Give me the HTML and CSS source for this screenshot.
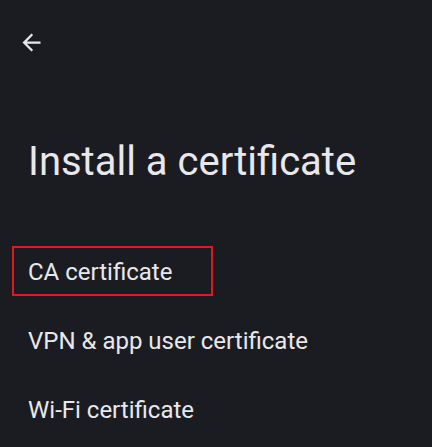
FILE: index.html
```html
<!DOCTYPE html>
<html lang="en">
<head>
    <meta charset="UTF-8">
    <meta name="viewport" content="width=device-width, initial-scale=1.0">
    <title>Install a certificate</title>
    <link rel="stylesheet" href="styles.css">
</head>
<body>
    <!-- Top bar -->
    <div class="top-bar">
        <button class="back-btn" aria-label="Back">
            <svg viewBox="0 0 24 24" width="27" height="27">
                <path d="M20 11H7.83l5.59-5.59L12 4l-8 8 8 8 1.41-1.41L7.83 13H20v-2z" fill="#e8e8ec"/>
            </svg>
        </button>
    </div>

    <h1 class="page-title">Install a certificate</h1>

    <!-- Options -->
    <ul class="option-list">
        <li class="option highlighted">CA certificate</li>
        <li class="option">VPN &amp; app user certificate</li>
        <li class="option">Wi-Fi certificate</li>
    </ul>
</body>
</html>
```

FILE: styles.css
```css
/* Global */
body {
    margin: 0;
    background: #1b1c21;
    color: #e8e8ec;
    font-family: 'Roboto', 'Noto Sans', sans-serif;
    height: 447px;
    overflow: hidden;
}

/* Top bar */
.top-bar {
    padding: 29px 0 0 18px;
    height: 40px;
}

.back-btn {
    background: none;
    border: none;
    padding: 0;
    display: block;
}

.back-btn svg {
    display: block;
}

/* Title */
.page-title {
    font-size: 40px;
    font-weight: 400;
    margin: 69px 0 0 28px;
    line-height: 48px;
}

/* Options */
.option-list {
    list-style: none;
    margin: 61px 0 0 0;
    padding: 0;
}

.option {
    font-size: 24px;
    line-height: 28px;
    padding: 11px 0 11px 28px;
    margin-bottom: 19px;
}

.highlighted {
    position: relative;
}

.highlighted::after {
    content: "";
    position: absolute;
    left: 12px;
    top: -1px;
    width: 197px;
    height: 46px;
    border: 2px solid #e0181f;
}
```
